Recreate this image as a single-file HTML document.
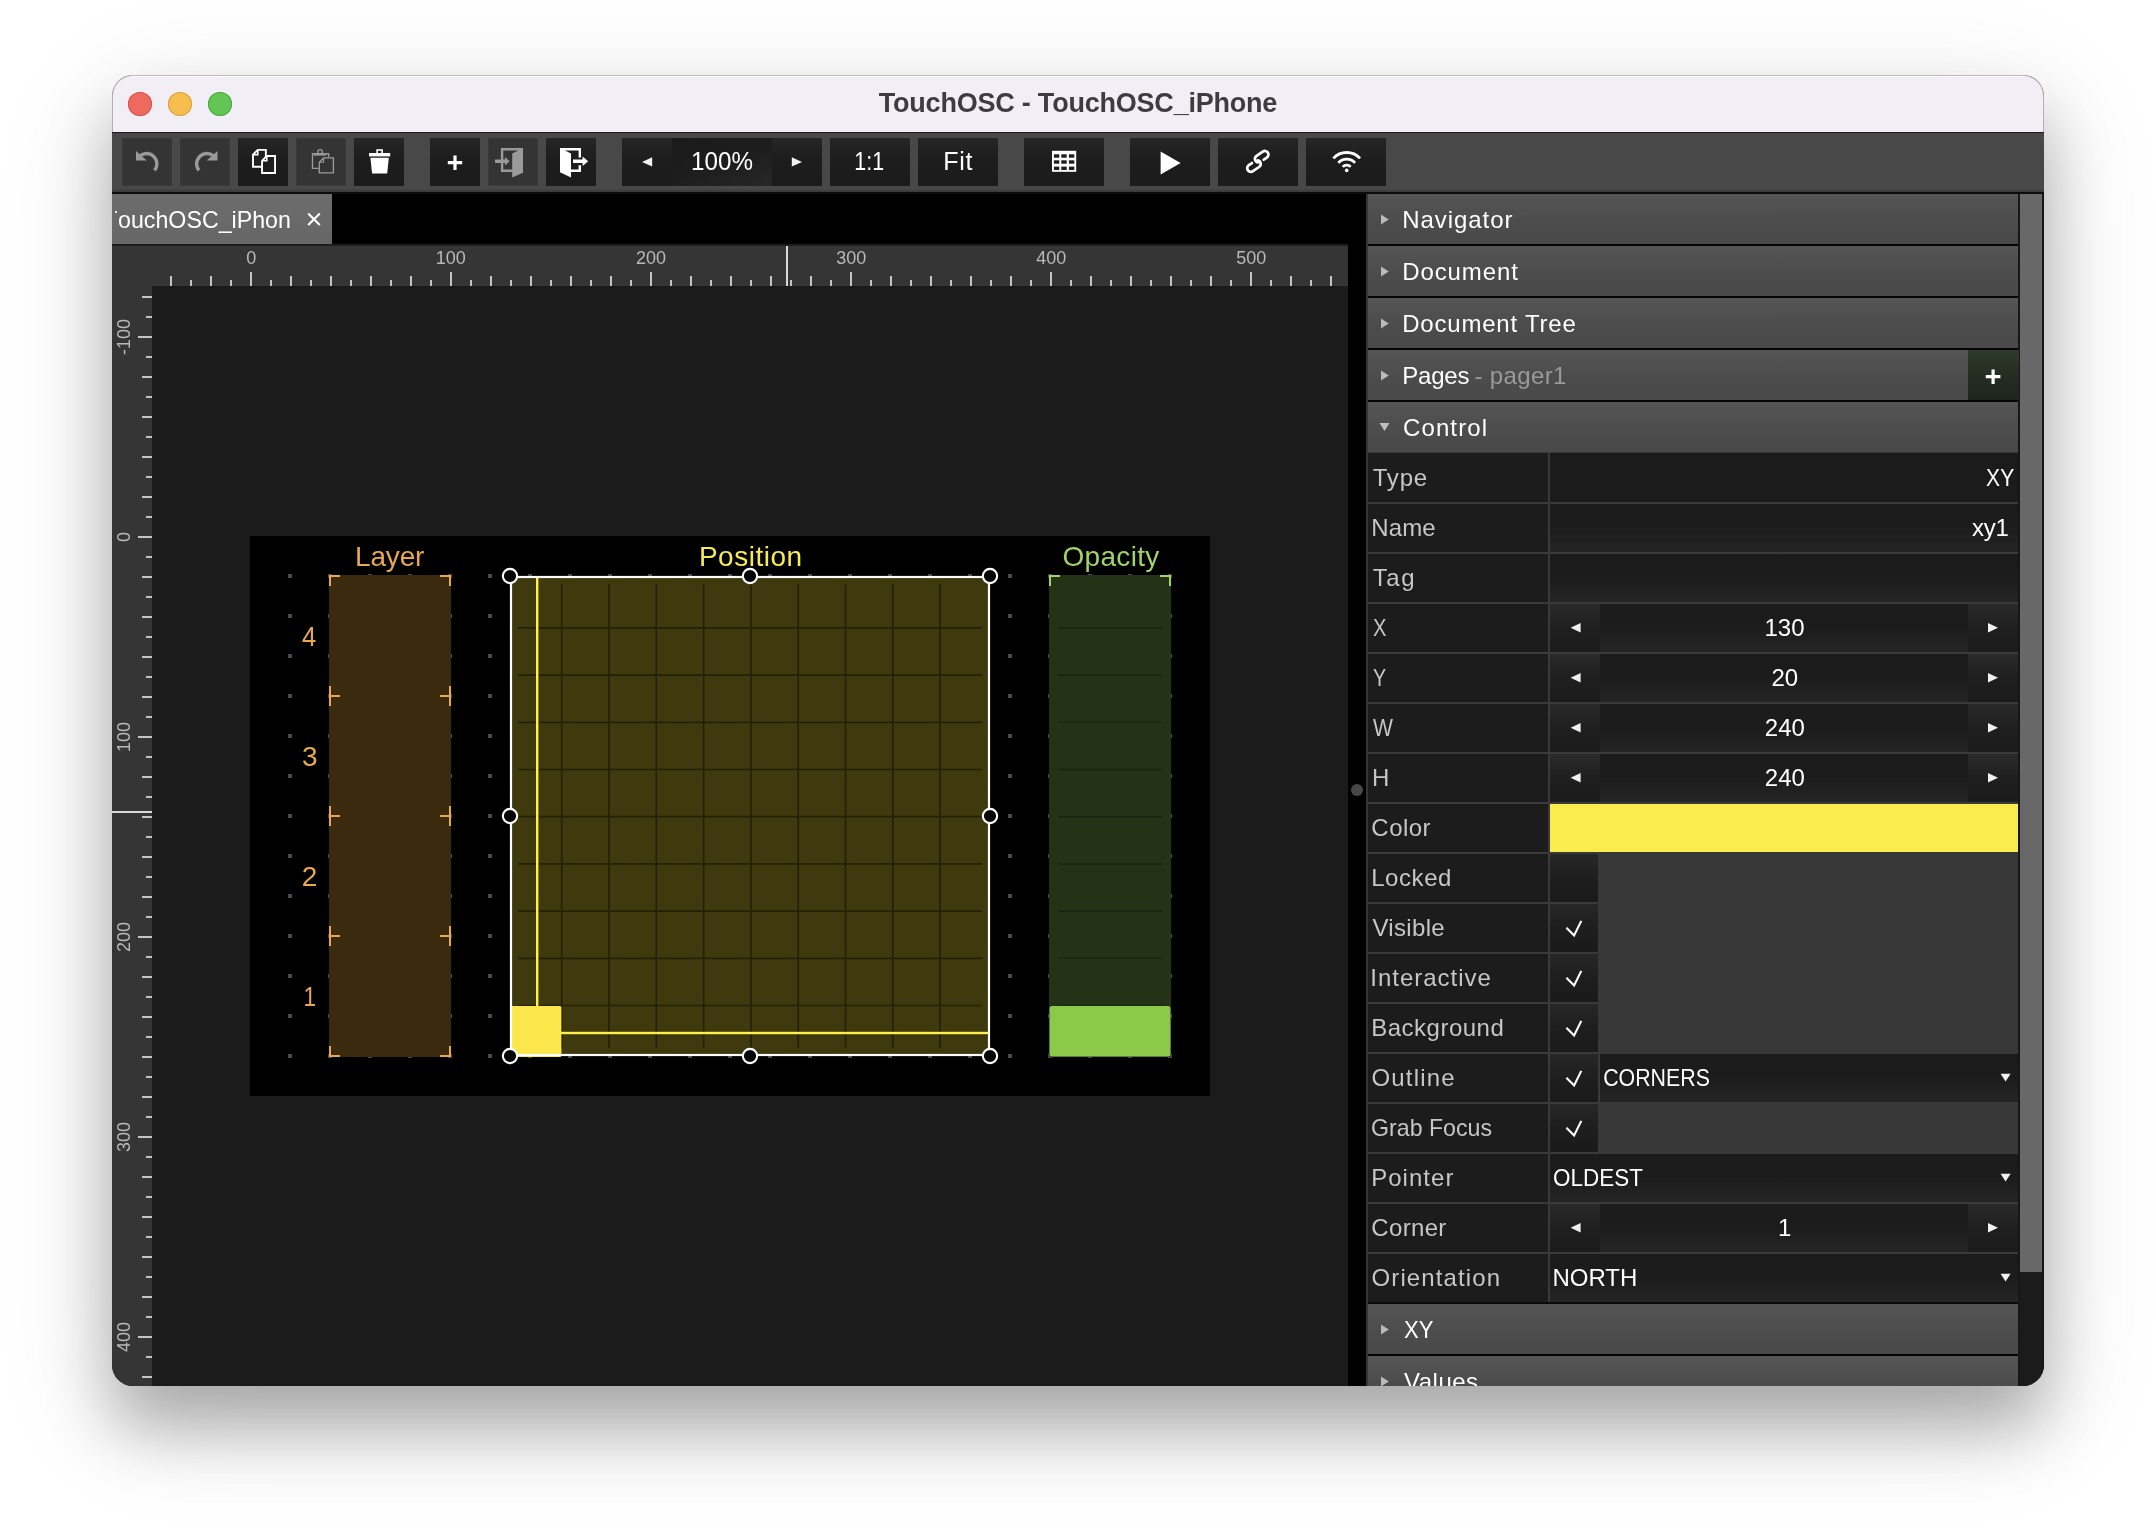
<!DOCTYPE html>
<html lang="en"><head><meta charset="utf-8"><title>TouchOSC - TouchOSC_iPhone</title>
<style>
html,body{margin:0;padding:0;}
body{width:2156px;height:1534px;background:#fff;overflow:hidden;position:relative;font-family:"Liberation Sans",sans-serif;}
.t{position:absolute;white-space:pre;font-family:"Liberation Sans",sans-serif;}
#win{position:absolute;left:112px;top:75px;width:1932px;height:1311px;border-radius:21px;overflow:hidden;background:#1b1b1b;}
#shadow{position:absolute;left:112px;top:75px;width:1932px;height:1311px;border-radius:21px;
 box-shadow:0 42px 66px rgba(0,0,0,0.28),0 30px 125px rgba(0,0,0,0.12);}
#abs{position:absolute;left:-112px;top:-75px;width:2156px;height:1534px;will-change:transform;}
.btn{position:absolute;top:138px;height:48px;background:linear-gradient(180deg,#262626 0%,#1d1d1d 45%,#1b1b1b 100%);}
.btn.dis{background:#343434;box-shadow:inset 0 0 0 1px #3a3a3a;}
.hdr{position:absolute;left:1368px;width:650px;height:50px;background:linear-gradient(180deg,#555 0%,#4c4c4c 55%,#494949 100%);}
.lab{position:absolute;left:1368px;width:180px;height:48px;background:#1c1c1c;}
.val{position:absolute;left:1550px;width:468px;height:48px;background:linear-gradient(180deg,#1b1b1b 0%,#1c1c1c 50%,#252525 100%);}
.sb{position:absolute;width:50px;height:48px;background:linear-gradient(180deg,#2a2a2a 0%,#1f1f1f 50%,#1b1b1b 100%);}
.chk{position:absolute;left:1550px;width:48px;height:48px;background:linear-gradient(180deg,#272727 0%,#1e1e1e 50%,#1a1a1a 100%);}
svg{position:absolute;overflow:visible;}
</style></head><body>
<div id="shadow"></div>
<div id="win"><div id="abs">

<div class="" style="position:absolute;left:112px;top:75px;width:1932px;height:57px;background:#f1eff5;box-shadow:inset 0 2px 0 rgba(255,255,255,0.85);"></div>
<div class="" style="position:absolute;left:112px;top:132px;width:1932px;height:1px;background:#26252a;"></div>
<div class="" style="position:absolute;left:128px;top:91.8px;width:24px;height:24px;border-radius:50%;background:#ee6a5f;box-shadow:inset 0 0 0 1px #d5544a;"></div>
<div class="" style="position:absolute;left:168px;top:91.8px;width:24px;height:24px;border-radius:50%;background:#f5be4f;box-shadow:inset 0 0 0 1px #d9a13c;"></div>
<div class="" style="position:absolute;left:208px;top:91.8px;width:24px;height:24px;border-radius:50%;background:#62c554;box-shadow:inset 0 0 0 1px #4ea73f;"></div>
<span class="t " style="left:878.75px;top:90.00px;font-size:27px;line-height:27px;font-weight:700;color:#3e3c41;letter-spacing:-0.215px;">TouchOSC - TouchOSC_iPhone</span>
<div class="" style="position:absolute;left:112px;top:133px;width:1932px;height:59px;background:#484848;"></div>
<div class="" style="position:absolute;left:112px;top:189px;width:1932px;height:3px;background:linear-gradient(180deg,#454545,#3a3a3a);"></div>
<div class="" style="position:absolute;left:112px;top:192px;width:1932px;height:2px;background:#0c0c0c;"></div>
<div class="btn dis" style="left:122px;width:50px;"></div>
<div class="btn dis" style="left:180px;width:50px;"></div>
<div class="btn" style="left:238px;width:50px;"></div>
<div class="btn dis" style="left:296px;width:50px;"></div>
<div class="btn" style="left:354px;width:50px;"></div>
<div class="btn" style="left:430px;width:50px;"></div>
<div class="btn dis" style="left:488px;width:50px;"></div>
<div class="btn" style="left:546px;width:50px;"></div>
<div class="btn" style="left:622px;width:50px;"></div>
<div class="btn" style="left:672px;width:100px;background:linear-gradient(160deg,#1b1b1b 0%,#1d1d1d 50%,#272727 100%);"></div>
<div class="btn" style="left:772px;width:50px;"></div>
<div class="btn" style="left:830px;width:80px;"></div>
<div class="btn" style="left:918px;width:80px;"></div>
<div class="btn" style="left:1024px;width:80px;"></div>
<div class="btn" style="left:1130px;width:80px;"></div>
<div class="btn" style="left:1218px;width:80px;"></div>
<div class="btn" style="left:1306px;width:80px;"></div>
<svg width="2156" height="1534" style="left:0;top:0" viewBox="0 0 2156 1534"><g transform="translate(147,0) scale(1,1)" fill="none" stroke="#9a9a9a" stroke-width="3.5"><path d="M-6.7,155.7 A10.3,10.3 0 0 1 7.55,170.4"/><path d="M-11,151 L-11,160.4 L-0.2,160.4 Z" fill="#9a9a9a" stroke="none"/></g><g transform="translate(206.5,0) scale(-1,1)" fill="none" stroke="#9a9a9a" stroke-width="3.5"><path d="M-6.7,155.7 A10.3,10.3 0 0 1 7.55,170.4"/><path d="M-11,151 L-11,160.4 L-0.2,160.4 Z" fill="#9a9a9a" stroke="none"/></g><path d="M257.8,149.85 L265.85,149.85 L265.85,166.75 L253.0,166.75 L253.0,154.65 Z" fill="#1e1e1e" stroke="#ffffff" stroke-width="1.9" stroke-linejoin="miter"/><path d="M253.0,154.65 L257.8,154.65 L257.8,149.85" fill="none" stroke="#ffffff" stroke-width="1.52"/><path d="M266.85,156.0 L275.05,156.0 L275.05,173.05 L262.05,173.05 L262.05,160.8 Z" fill="#1e1e1e" stroke="#ffffff" stroke-width="1.9" stroke-linejoin="miter"/><path d="M262.05,160.8 L266.85,160.8 L266.85,156.0" fill="none" stroke="#ffffff" stroke-width="1.52"/><path d="M328.6,156.9 V153.7 H312.5 V168.3 H318.8" fill="none" stroke="#9a9a9a" stroke-width="1.35"/><rect x="313.8" y="153.3" width="12.1" height="2.3" fill="#9a9a9a"/><path d="M317.9,153.4 V151.8 A2.15,2.15 0 0 1 322.2,151.8 V153.4" fill="none" stroke="#9a9a9a" stroke-width="1.4"/><path d="M323.6,157.9 L333.40000000000003,157.9 L333.40000000000003,172.9 L319.3,172.9 L319.3,162.20000000000002 Z" fill="#343434" stroke="#9a9a9a" stroke-width="1.35" stroke-linejoin="miter"/><path d="M319.3,162.20000000000002 L323.6,162.20000000000002 L323.6,157.9" fill="none" stroke="#9a9a9a" stroke-width="1.08"/><rect x="369" y="153" width="21.2" height="3.4" fill="#ffffff"/><rect x="377.1" y="150" width="5" height="4" fill="none" stroke="#ffffff" stroke-width="1.6"/><path d="M370.4,157.8 L388.8,157.8 L387.2,173.6 L372.1,173.6 Z" fill="#ffffff"/><path d="M447.8,162.7 H462.2 M455,155.4 V170" stroke="#ffffff" stroke-width="3.2"/><path d="M523,149.2 H502.1 V170.8 H513" fill="none" stroke="#9a9a9a" stroke-width="2.4"/><path d="M512.2,153.4 L523,148 L523,172.8 L512.2,177.6 Z" fill="#9a9a9a"/><path d="M495,159.6 H505 V157 L509.6,161.3 L505,165.6 V163 H495 Z" fill="#9a9a9a"/><path d="M560,148 L571,153.4 L571,177.6 L560,172.2 Z" fill="#ffffff"/><path d="M560,149.2 H579.8 V157.4 M579.8,165.2 V170.8 H571" fill="none" stroke="#ffffff" stroke-width="2.4"/><path d="M573,159.6 H582.6 V156.6 L588.2,161.3 L582.6,166 V163 H573 Z" fill="#ffffff"/><path d="M652.2,157.2 L652.2,166.6 L642,161.9 Z" fill="#f0f0f0"/><path d="M791.8,157.2 L791.8,166.6 L802,161.9 Z" fill="#f0f0f0"/><rect x="1052" y="150.8" width="24.2" height="21" fill="#ffffff"/><rect x="1053.9" y="154.3" width="5.4" height="3.4" fill="#1e1e1e"/><rect x="1053.9" y="160.3" width="5.4" height="3.4" fill="#1e1e1e"/><rect x="1053.9" y="166.6" width="5.4" height="3.4" fill="#1e1e1e"/><rect x="1061.3" y="154.3" width="5.4" height="3.4" fill="#1e1e1e"/><rect x="1061.3" y="160.3" width="5.4" height="3.4" fill="#1e1e1e"/><rect x="1061.3" y="166.6" width="5.4" height="3.4" fill="#1e1e1e"/><rect x="1068.9" y="154.3" width="5.4" height="3.4" fill="#1e1e1e"/><rect x="1068.9" y="160.3" width="5.4" height="3.4" fill="#1e1e1e"/><rect x="1068.9" y="166.6" width="5.4" height="3.4" fill="#1e1e1e"/><path d="M1160.6,151.6 L1180.6,163 L1160.6,174.4 Z" fill="#ffffff"/><g fill="none" stroke="#ffffff" stroke-width="2.7" stroke-linecap="round"><path transform="translate(1253.97,166.07) rotate(-34)" d="M0,-3.65 H-3.75 A3.65,3.65 0 0 0 -3.75,3.65 H3.75 A3.65,3.65 0 0 0 6.33,-2.58"/><path transform="translate(1261.7,156.7) rotate(146)" d="M0,-3.65 H-3.75 A3.65,3.65 0 0 0 -3.75,3.65 H3.75 A3.65,3.65 0 0 0 6.33,-2.58"/></g><g fill="none" stroke="#ffffff" stroke-width="2.8" stroke-linecap="butt"><path d="M1333.40,158.42 A17.9,17.9 0 0 1 1360.00,158.42"/><path d="M1338.38,162.91 A11.2,11.2 0 0 1 1355.02,162.91"/><path d="M1342.76,166.85 A5.3,5.3 0 0 1 1350.64,166.85"/></g><circle cx="1346.7" cy="170.4" r="1.8" fill="#ffffff"/></svg>
<span class="t " style="left:690.52px;top:149.00px;font-size:25px;line-height:25px;font-weight:400;color:#fff;letter-spacing:0.000px;transform:scaleX(0.9682);transform-origin:1.88px 50%;">100%</span>
<span class="t " style="left:854.12px;top:149.00px;font-size:25px;line-height:25px;font-weight:400;color:#fff;letter-spacing:0.000px;transform:scaleX(0.8567);transform-origin:1.88px 50%;">1:1</span>
<span class="t " style="left:943.30px;top:149.00px;font-size:25px;line-height:25px;font-weight:400;color:#fff;letter-spacing:0.738px;">Fit</span>
<div class="" style="position:absolute;left:112px;top:194px;width:1254px;height:52px;background:#000;"></div>
<div class="" style="position:absolute;left:112px;top:194px;width:220px;height:50px;background:linear-gradient(180deg,#6d6d6d,#666);overflow:hidden;"></div>
<div class="" style="position:absolute;left:112px;top:194px;width:220px;height:50px;overflow:hidden;"><span class="t " style="left:6.40px;top:13.60px;font-size:24px;line-height:24px;font-weight:400;color:#fff;letter-spacing:0.000px;transform:scaleX(0.9669);transform-origin:1.00px 50%;">ouchOSC_iPhon</span><div class="" style="position:absolute;left:3.4px;top:16.6px;width:1.8px;height:2.2px;background:#e8e8e8;"></div></div>
<svg width="14" height="14" style="left:307px;top:212px" viewBox="0 0 14 14"><path d="M1.2,1.4 L12.8,13 M12.8,1.4 L1.2,13" stroke="#fff" stroke-width="2.1" fill="none"/></svg>
<div class="" style="position:absolute;left:112px;top:244px;width:1236px;height:2px;background:#1d1d1d;"></div>
<div class="" style="position:absolute;left:112px;top:246px;width:1236px;height:40px;background:#353535;"></div>
<div class="" style="position:absolute;left:112px;top:246px;width:40px;height:1140px;background:#353535;"></div>
<div class="" style="position:absolute;left:152px;top:286px;width:1196px;height:1100px;background:#1b1b1b;"></div>
<svg width="2156" height="1534" style="left:0;top:0" viewBox="0 0 2156 1534" fill="#c4c4c4"><rect x="170" y="276" width="2" height="10"/><rect x="190" y="280" width="2" height="6"/><rect x="210" y="276" width="2" height="10"/><rect x="230" y="280" width="2" height="6"/><rect x="250" y="272" width="2" height="14"/><rect x="270" y="280" width="2" height="6"/><rect x="290" y="276" width="2" height="10"/><rect x="310" y="280" width="2" height="6"/><rect x="330" y="276" width="2" height="10"/><rect x="350" y="280" width="2" height="6"/><rect x="370" y="276" width="2" height="10"/><rect x="390" y="280" width="2" height="6"/><rect x="410" y="276" width="2" height="10"/><rect x="430" y="280" width="2" height="6"/><rect x="450" y="272" width="2" height="14"/><rect x="470" y="280" width="2" height="6"/><rect x="490" y="276" width="2" height="10"/><rect x="510" y="280" width="2" height="6"/><rect x="530" y="276" width="2" height="10"/><rect x="550" y="280" width="2" height="6"/><rect x="570" y="276" width="2" height="10"/><rect x="590" y="280" width="2" height="6"/><rect x="610" y="276" width="2" height="10"/><rect x="630" y="280" width="2" height="6"/><rect x="650" y="272" width="2" height="14"/><rect x="670" y="280" width="2" height="6"/><rect x="690" y="276" width="2" height="10"/><rect x="710" y="280" width="2" height="6"/><rect x="730" y="276" width="2" height="10"/><rect x="750" y="280" width="2" height="6"/><rect x="770" y="276" width="2" height="10"/><rect x="790" y="280" width="2" height="6"/><rect x="810" y="276" width="2" height="10"/><rect x="830" y="280" width="2" height="6"/><rect x="850" y="272" width="2" height="14"/><rect x="870" y="280" width="2" height="6"/><rect x="890" y="276" width="2" height="10"/><rect x="910" y="280" width="2" height="6"/><rect x="930" y="276" width="2" height="10"/><rect x="950" y="280" width="2" height="6"/><rect x="970" y="276" width="2" height="10"/><rect x="990" y="280" width="2" height="6"/><rect x="1010" y="276" width="2" height="10"/><rect x="1030" y="280" width="2" height="6"/><rect x="1050" y="272" width="2" height="14"/><rect x="1070" y="280" width="2" height="6"/><rect x="1090" y="276" width="2" height="10"/><rect x="1110" y="280" width="2" height="6"/><rect x="1130" y="276" width="2" height="10"/><rect x="1150" y="280" width="2" height="6"/><rect x="1170" y="276" width="2" height="10"/><rect x="1190" y="280" width="2" height="6"/><rect x="1210" y="276" width="2" height="10"/><rect x="1230" y="280" width="2" height="6"/><rect x="1250" y="272" width="2" height="14"/><rect x="1270" y="280" width="2" height="6"/><rect x="1290" y="276" width="2" height="10"/><rect x="1310" y="280" width="2" height="6"/><rect x="1330" y="276" width="2" height="10"/><rect x="142" y="296" width="10" height="2"/><rect x="146" y="316" width="6" height="2"/><rect x="138" y="336" width="14" height="2"/><rect x="146" y="356" width="6" height="2"/><rect x="142" y="376" width="10" height="2"/><rect x="146" y="396" width="6" height="2"/><rect x="142" y="416" width="10" height="2"/><rect x="146" y="436" width="6" height="2"/><rect x="142" y="456" width="10" height="2"/><rect x="146" y="476" width="6" height="2"/><rect x="142" y="496" width="10" height="2"/><rect x="146" y="516" width="6" height="2"/><rect x="138" y="536" width="14" height="2"/><rect x="146" y="556" width="6" height="2"/><rect x="142" y="576" width="10" height="2"/><rect x="146" y="596" width="6" height="2"/><rect x="142" y="616" width="10" height="2"/><rect x="146" y="636" width="6" height="2"/><rect x="142" y="656" width="10" height="2"/><rect x="146" y="676" width="6" height="2"/><rect x="142" y="696" width="10" height="2"/><rect x="146" y="716" width="6" height="2"/><rect x="138" y="736" width="14" height="2"/><rect x="146" y="756" width="6" height="2"/><rect x="142" y="776" width="10" height="2"/><rect x="146" y="796" width="6" height="2"/><rect x="142" y="816" width="10" height="2"/><rect x="146" y="836" width="6" height="2"/><rect x="142" y="856" width="10" height="2"/><rect x="146" y="876" width="6" height="2"/><rect x="142" y="896" width="10" height="2"/><rect x="146" y="916" width="6" height="2"/><rect x="138" y="936" width="14" height="2"/><rect x="146" y="956" width="6" height="2"/><rect x="142" y="976" width="10" height="2"/><rect x="146" y="996" width="6" height="2"/><rect x="142" y="1016" width="10" height="2"/><rect x="146" y="1036" width="6" height="2"/><rect x="142" y="1056" width="10" height="2"/><rect x="146" y="1076" width="6" height="2"/><rect x="142" y="1096" width="10" height="2"/><rect x="146" y="1116" width="6" height="2"/><rect x="138" y="1136" width="14" height="2"/><rect x="146" y="1156" width="6" height="2"/><rect x="142" y="1176" width="10" height="2"/><rect x="146" y="1196" width="6" height="2"/><rect x="142" y="1216" width="10" height="2"/><rect x="146" y="1236" width="6" height="2"/><rect x="142" y="1256" width="10" height="2"/><rect x="146" y="1276" width="6" height="2"/><rect x="142" y="1296" width="10" height="2"/><rect x="146" y="1316" width="6" height="2"/><rect x="138" y="1336" width="14" height="2"/><rect x="146" y="1356" width="6" height="2"/><rect x="142" y="1376" width="10" height="2"/></svg>
<span class="t " style="left:246.14px;top:249.00px;font-size:18px;line-height:18px;font-weight:400;color:#b9b9b9;letter-spacing:0.000px;">0</span>
<span class="t " style="left:435.82px;top:249.00px;font-size:18px;line-height:18px;font-weight:400;color:#b9b9b9;letter-spacing:0.000px;">100</span>
<span class="t " style="left:636.08px;top:249.00px;font-size:18px;line-height:18px;font-weight:400;color:#b9b9b9;letter-spacing:0.000px;">200</span>
<span class="t " style="left:836.20px;top:249.00px;font-size:18px;line-height:18px;font-weight:400;color:#b9b9b9;letter-spacing:0.000px;">300</span>
<span class="t " style="left:1036.33px;top:249.00px;font-size:18px;line-height:18px;font-weight:400;color:#b9b9b9;letter-spacing:0.000px;">400</span>
<span class="t " style="left:1236.14px;top:249.00px;font-size:18px;line-height:18px;font-weight:400;color:#b9b9b9;letter-spacing:0.000px;">500</span>
<div style="position:absolute;left:74.4px;top:327px;width:100px;height:20px;transform:rotate(-90deg);text-align:center;font:400 18px/20px 'Liberation Sans',sans-serif;color:#b9b9b9;">-100</div>
<div style="position:absolute;left:74.4px;top:527px;width:100px;height:20px;transform:rotate(-90deg);text-align:center;font:400 18px/20px 'Liberation Sans',sans-serif;color:#b9b9b9;">0</div>
<div style="position:absolute;left:74.4px;top:727px;width:100px;height:20px;transform:rotate(-90deg);text-align:center;font:400 18px/20px 'Liberation Sans',sans-serif;color:#b9b9b9;">100</div>
<div style="position:absolute;left:74.4px;top:927px;width:100px;height:20px;transform:rotate(-90deg);text-align:center;font:400 18px/20px 'Liberation Sans',sans-serif;color:#b9b9b9;">200</div>
<div style="position:absolute;left:74.4px;top:1127px;width:100px;height:20px;transform:rotate(-90deg);text-align:center;font:400 18px/20px 'Liberation Sans',sans-serif;color:#b9b9b9;">300</div>
<div style="position:absolute;left:74.4px;top:1327px;width:100px;height:20px;transform:rotate(-90deg);text-align:center;font:400 18px/20px 'Liberation Sans',sans-serif;color:#b9b9b9;">400</div>
<div class="" style="position:absolute;left:786px;top:246px;width:2px;height:40px;background:#d8d8d8;"></div>
<div class="" style="position:absolute;left:112px;top:811px;width:40px;height:2px;background:#d8d8d8;"></div>
<div class="" style="position:absolute;left:1348px;top:194px;width:18px;height:1192px;background:#000;"></div>
<div class="" style="position:absolute;left:1351.1px;top:784.2px;width:11.8px;height:11.8px;border-radius:50%;background:#474747;"></div>
<div class="" style="position:absolute;left:250px;top:536px;width:960px;height:560px;background:#000;"></div>
<svg width="2156" height="1534" style="left:0;top:0" viewBox="0 0 2156 1534"><path d="M288,574h4v4h-4zM288,614h4v4h-4zM288,654h4v4h-4zM288,694h4v4h-4zM288,734h4v4h-4zM288,774h4v4h-4zM288,814h4v4h-4zM288,854h4v4h-4zM288,894h4v4h-4zM288,934h4v4h-4zM288,974h4v4h-4zM288,1014h4v4h-4zM288,1054h4v4h-4zM328,574h4v4h-4zM328,614h4v4h-4zM328,654h4v4h-4zM328,694h4v4h-4zM328,734h4v4h-4zM328,774h4v4h-4zM328,814h4v4h-4zM328,854h4v4h-4zM328,894h4v4h-4zM328,934h4v4h-4zM328,974h4v4h-4zM328,1014h4v4h-4zM328,1054h4v4h-4zM368,574h4v4h-4zM368,614h4v4h-4zM368,654h4v4h-4zM368,694h4v4h-4zM368,734h4v4h-4zM368,774h4v4h-4zM368,814h4v4h-4zM368,854h4v4h-4zM368,894h4v4h-4zM368,934h4v4h-4zM368,974h4v4h-4zM368,1014h4v4h-4zM368,1054h4v4h-4zM408,574h4v4h-4zM408,614h4v4h-4zM408,654h4v4h-4zM408,694h4v4h-4zM408,734h4v4h-4zM408,774h4v4h-4zM408,814h4v4h-4zM408,854h4v4h-4zM408,894h4v4h-4zM408,934h4v4h-4zM408,974h4v4h-4zM408,1014h4v4h-4zM408,1054h4v4h-4zM448,574h4v4h-4zM448,614h4v4h-4zM448,654h4v4h-4zM448,694h4v4h-4zM448,734h4v4h-4zM448,774h4v4h-4zM448,814h4v4h-4zM448,854h4v4h-4zM448,894h4v4h-4zM448,934h4v4h-4zM448,974h4v4h-4zM448,1014h4v4h-4zM448,1054h4v4h-4zM488,574h4v4h-4zM488,614h4v4h-4zM488,654h4v4h-4zM488,694h4v4h-4zM488,734h4v4h-4zM488,774h4v4h-4zM488,814h4v4h-4zM488,854h4v4h-4zM488,894h4v4h-4zM488,934h4v4h-4zM488,974h4v4h-4zM488,1014h4v4h-4zM488,1054h4v4h-4zM528,574h4v4h-4zM528,614h4v4h-4zM528,654h4v4h-4zM528,694h4v4h-4zM528,734h4v4h-4zM528,774h4v4h-4zM528,814h4v4h-4zM528,854h4v4h-4zM528,894h4v4h-4zM528,934h4v4h-4zM528,974h4v4h-4zM528,1014h4v4h-4zM528,1054h4v4h-4zM568,574h4v4h-4zM568,614h4v4h-4zM568,654h4v4h-4zM568,694h4v4h-4zM568,734h4v4h-4zM568,774h4v4h-4zM568,814h4v4h-4zM568,854h4v4h-4zM568,894h4v4h-4zM568,934h4v4h-4zM568,974h4v4h-4zM568,1014h4v4h-4zM568,1054h4v4h-4zM608,574h4v4h-4zM608,614h4v4h-4zM608,654h4v4h-4zM608,694h4v4h-4zM608,734h4v4h-4zM608,774h4v4h-4zM608,814h4v4h-4zM608,854h4v4h-4zM608,894h4v4h-4zM608,934h4v4h-4zM608,974h4v4h-4zM608,1014h4v4h-4zM608,1054h4v4h-4zM648,574h4v4h-4zM648,614h4v4h-4zM648,654h4v4h-4zM648,694h4v4h-4zM648,734h4v4h-4zM648,774h4v4h-4zM648,814h4v4h-4zM648,854h4v4h-4zM648,894h4v4h-4zM648,934h4v4h-4zM648,974h4v4h-4zM648,1014h4v4h-4zM648,1054h4v4h-4zM688,574h4v4h-4zM688,614h4v4h-4zM688,654h4v4h-4zM688,694h4v4h-4zM688,734h4v4h-4zM688,774h4v4h-4zM688,814h4v4h-4zM688,854h4v4h-4zM688,894h4v4h-4zM688,934h4v4h-4zM688,974h4v4h-4zM688,1014h4v4h-4zM688,1054h4v4h-4zM728,574h4v4h-4zM728,614h4v4h-4zM728,654h4v4h-4zM728,694h4v4h-4zM728,734h4v4h-4zM728,774h4v4h-4zM728,814h4v4h-4zM728,854h4v4h-4zM728,894h4v4h-4zM728,934h4v4h-4zM728,974h4v4h-4zM728,1014h4v4h-4zM728,1054h4v4h-4zM768,574h4v4h-4zM768,614h4v4h-4zM768,654h4v4h-4zM768,694h4v4h-4zM768,734h4v4h-4zM768,774h4v4h-4zM768,814h4v4h-4zM768,854h4v4h-4zM768,894h4v4h-4zM768,934h4v4h-4zM768,974h4v4h-4zM768,1014h4v4h-4zM768,1054h4v4h-4zM808,574h4v4h-4zM808,614h4v4h-4zM808,654h4v4h-4zM808,694h4v4h-4zM808,734h4v4h-4zM808,774h4v4h-4zM808,814h4v4h-4zM808,854h4v4h-4zM808,894h4v4h-4zM808,934h4v4h-4zM808,974h4v4h-4zM808,1014h4v4h-4zM808,1054h4v4h-4zM848,574h4v4h-4zM848,614h4v4h-4zM848,654h4v4h-4zM848,694h4v4h-4zM848,734h4v4h-4zM848,774h4v4h-4zM848,814h4v4h-4zM848,854h4v4h-4zM848,894h4v4h-4zM848,934h4v4h-4zM848,974h4v4h-4zM848,1014h4v4h-4zM848,1054h4v4h-4zM888,574h4v4h-4zM888,614h4v4h-4zM888,654h4v4h-4zM888,694h4v4h-4zM888,734h4v4h-4zM888,774h4v4h-4zM888,814h4v4h-4zM888,854h4v4h-4zM888,894h4v4h-4zM888,934h4v4h-4zM888,974h4v4h-4zM888,1014h4v4h-4zM888,1054h4v4h-4zM928,574h4v4h-4zM928,614h4v4h-4zM928,654h4v4h-4zM928,694h4v4h-4zM928,734h4v4h-4zM928,774h4v4h-4zM928,814h4v4h-4zM928,854h4v4h-4zM928,894h4v4h-4zM928,934h4v4h-4zM928,974h4v4h-4zM928,1014h4v4h-4zM928,1054h4v4h-4zM968,574h4v4h-4zM968,614h4v4h-4zM968,654h4v4h-4zM968,694h4v4h-4zM968,734h4v4h-4zM968,774h4v4h-4zM968,814h4v4h-4zM968,854h4v4h-4zM968,894h4v4h-4zM968,934h4v4h-4zM968,974h4v4h-4zM968,1014h4v4h-4zM968,1054h4v4h-4zM1008,574h4v4h-4zM1008,614h4v4h-4zM1008,654h4v4h-4zM1008,694h4v4h-4zM1008,734h4v4h-4zM1008,774h4v4h-4zM1008,814h4v4h-4zM1008,854h4v4h-4zM1008,894h4v4h-4zM1008,934h4v4h-4zM1008,974h4v4h-4zM1008,1014h4v4h-4zM1008,1054h4v4h-4zM1048,574h4v4h-4zM1048,614h4v4h-4zM1048,654h4v4h-4zM1048,694h4v4h-4zM1048,734h4v4h-4zM1048,774h4v4h-4zM1048,814h4v4h-4zM1048,854h4v4h-4zM1048,894h4v4h-4zM1048,934h4v4h-4zM1048,974h4v4h-4zM1048,1014h4v4h-4zM1048,1054h4v4h-4zM1088,574h4v4h-4zM1088,614h4v4h-4zM1088,654h4v4h-4zM1088,694h4v4h-4zM1088,734h4v4h-4zM1088,774h4v4h-4zM1088,814h4v4h-4zM1088,854h4v4h-4zM1088,894h4v4h-4zM1088,934h4v4h-4zM1088,974h4v4h-4zM1088,1014h4v4h-4zM1088,1054h4v4h-4zM1128,574h4v4h-4zM1128,614h4v4h-4zM1128,654h4v4h-4zM1128,694h4v4h-4zM1128,734h4v4h-4zM1128,774h4v4h-4zM1128,814h4v4h-4zM1128,854h4v4h-4zM1128,894h4v4h-4zM1128,934h4v4h-4zM1128,974h4v4h-4zM1128,1014h4v4h-4zM1128,1054h4v4h-4zM1168,574h4v4h-4zM1168,614h4v4h-4zM1168,654h4v4h-4zM1168,694h4v4h-4zM1168,734h4v4h-4zM1168,774h4v4h-4zM1168,814h4v4h-4zM1168,854h4v4h-4zM1168,894h4v4h-4zM1168,934h4v4h-4zM1168,974h4v4h-4zM1168,1014h4v4h-4zM1168,1054h4v4h-4z" fill="#494949"/><rect x="329" y="575" width="122" height="482" fill="#3c2a0f"/><path d="M330,586V576H340 M440,576H450V586 M330,1046V1056H340 M440,1056H450V1046 M330,686V706 M330,696H340 M450,686V706 M450,696H440 M330,806V826 M330,816H340 M450,806V826 M450,816H440 M330,926V946 M330,936H340 M450,926V946 M450,936H440 " fill="none" stroke="#e9a84e" stroke-width="2"/><rect x="510" y="576" width="480" height="480" fill="#3e3a0e"/><path d="M561.7,584V1048 M518,627.9H982 M609.0,584V1048 M518,675.1H982 M656.3,584V1048 M518,722.3H982 M703.6,584V1048 M518,769.5H982 M750.9,584V1048 M518,816.7H982 M798.2,584V1048 M518,863.9H982 M845.5,584V1048 M518,911.1H982 M892.8,584V1048 M518,958.3H982 M940.1,584V1048 M518,1005.5H982 " fill="none" stroke="#252107" stroke-width="1.7"/><rect x="536" y="578" width="2.4" height="428" fill="#fff04a"/><rect x="561" y="1031.8" width="427" height="2.4" fill="#fff04a"/><rect x="511" y="1006" width="50.4" height="51" rx="1.5" fill="#fbe74b"/><rect x="511" y="577" width="478" height="478" fill="none" stroke="#fff" stroke-width="2.2"/><circle cx="510" cy="576" r="7.15" fill="#060606" stroke="#fff" stroke-width="2.1"/><circle cx="510" cy="816" r="7.15" fill="#060606" stroke="#fff" stroke-width="2.1"/><circle cx="510" cy="1056" r="7.15" fill="#060606" stroke="#fff" stroke-width="2.1"/><circle cx="750" cy="576" r="7.15" fill="#060606" stroke="#fff" stroke-width="2.1"/><circle cx="750" cy="1056" r="7.15" fill="#060606" stroke="#fff" stroke-width="2.1"/><circle cx="990" cy="576" r="7.15" fill="#060606" stroke="#fff" stroke-width="2.1"/><circle cx="990" cy="816" r="7.15" fill="#060606" stroke="#fff" stroke-width="2.1"/><circle cx="990" cy="1056" r="7.15" fill="#060606" stroke="#fff" stroke-width="2.1"/><rect x="1049" y="575" width="122" height="482" fill="#243216"/><path d="M1058,627.9H1162 M1058,675.1H1162 M1058,722.3H1162 M1058,769.5H1162 M1058,816.7H1162 M1058,863.9H1162 M1058,911.1H1162 M1058,958.3H1162 M1058,1005.5H1162 " fill="none" stroke="#1a2610" stroke-width="1.6"/><path d="M1050,586V576H1060 M1160,576H1170V586 " fill="none" stroke="#a0d465" stroke-width="2"/><rect x="1049.5" y="1006" width="121" height="50.6" rx="2.5" fill="#8bc94a"/></svg>
<span class="t " style="left:355.05px;top:543.00px;font-size:28px;line-height:28px;font-weight:400;color:#e9a84e;letter-spacing:-0.169px;">Layer</span>
<span class="t " style="left:698.95px;top:542.70px;font-size:28px;line-height:28px;font-weight:400;color:#f6ea55;letter-spacing:0.500px;">Position</span>
<span class="t " style="left:1062.42px;top:542.70px;font-size:28px;line-height:28px;font-weight:400;color:#a0d465;letter-spacing:0.338px;">Opacity</span>
<span class="t " style="left:302.18px;top:623.00px;font-size:28px;line-height:28px;font-weight:400;color:#e9a84e;letter-spacing:0.000px;transform:scaleX(0.9133);transform-origin:0.62px 50%;">4</span>
<span class="t " style="left:302.07px;top:743.00px;font-size:28px;line-height:28px;font-weight:400;color:#e9a84e;letter-spacing:0.000px;">3</span>
<span class="t " style="left:301.82px;top:863.00px;font-size:28px;line-height:28px;font-weight:400;color:#e9a84e;letter-spacing:0.000px;">2</span>
<span class="t " style="left:302.57px;top:983.00px;font-size:28px;line-height:28px;font-weight:400;color:#e9a84e;letter-spacing:0.000px;transform:scaleX(0.8082);transform-origin:2.12px 50%;">1</span>
<div class="" style="position:absolute;left:1366px;top:194px;width:678px;height:1192px;background:#1b1b1b;"></div>
<div class="" style="position:absolute;left:2018px;top:194px;width:2px;height:1192px;background:#171717;"></div>
<div class="" style="position:absolute;left:1366px;top:194px;width:2px;height:1192px;background:#353535;"></div>
<div class="hdr" style="top:194px;height:50px"></div>
<div class="" style="position:absolute;left:1368px;top:244px;width:650px;height:2px;background:#050505;"></div>
<svg width="10" height="12" style="left:1380px;top:213.6px" viewBox="0 0 10 12"><path d="M1,0.6 L8.8,5.5 L1,10.4 Z" fill="#bababa"/></svg>
<span class="t " style="left:1402.20px;top:207.80px;font-size:24px;line-height:24px;font-weight:400;color:#fff;letter-spacing:0.953px;">Navigator</span>
<div class="hdr" style="top:246px;height:50px"></div>
<div class="" style="position:absolute;left:1368px;top:296px;width:650px;height:2px;background:#050505;"></div>
<svg width="10" height="12" style="left:1380px;top:265.6px" viewBox="0 0 10 12"><path d="M1,0.6 L8.8,5.5 L1,10.4 Z" fill="#bababa"/></svg>
<span class="t " style="left:1402.20px;top:259.80px;font-size:24px;line-height:24px;font-weight:400;color:#fff;letter-spacing:0.907px;">Document</span>
<div class="hdr" style="top:298px;height:50px"></div>
<div class="" style="position:absolute;left:1368px;top:348px;width:650px;height:2px;background:#050505;"></div>
<svg width="10" height="12" style="left:1380px;top:317.6px" viewBox="0 0 10 12"><path d="M1,0.6 L8.8,5.5 L1,10.4 Z" fill="#bababa"/></svg>
<span class="t " style="left:1402.20px;top:311.80px;font-size:24px;line-height:24px;font-weight:400;color:#fff;letter-spacing:0.800px;">Document Tree</span>
<div class="hdr" style="top:350px;height:50px"></div>
<div class="" style="position:absolute;left:1368px;top:400px;width:650px;height:2px;background:#050505;"></div>
<svg width="10" height="12" style="left:1380px;top:369.6px" viewBox="0 0 10 12"><path d="M1,0.6 L8.8,5.5 L1,10.4 Z" fill="#bababa"/></svg>
<span class="t " style="left:1402.20px;top:363.80px;font-size:24px;line-height:24px;font-weight:400;color:#fff;letter-spacing:-0.206px;">Pages</span>
<span class="t " style="left:1474.50px;top:363.80px;font-size:24px;line-height:24px;font-weight:400;color:#9a9a9a;letter-spacing:0.350px;">- pager1</span>
<div class="" style="position:absolute;left:1968px;top:350px;width:51px;height:50px;background:linear-gradient(180deg,#2e3a2c 0%,#232d21 50%,#1e261c 100%);"></div>
<svg width="16" height="16" style="left:1985px;top:369px" viewBox="0 0 16 16"><path d="M0.8,7.7 H15.4 M8.1,0.4 V15" stroke="#fff" stroke-width="3.2" fill="none"/></svg>
<div class="hdr" style="top:402px;height:50px"></div>
<div class="" style="position:absolute;left:1368px;top:452px;width:650px;height:2px;background:#050505;"></div>
<svg width="12" height="10" style="left:1379px;top:422px" viewBox="0 0 12 10"><path d="M0.5,1 L10.5,1 L5.5,9 Z" fill="#bdbdbd"/></svg>
<span class="t " style="left:1402.95px;top:415.80px;font-size:24px;line-height:24px;font-weight:400;color:#fff;letter-spacing:1.133px;">Control</span>
<div class="" style="position:absolute;left:1368px;top:452px;width:650px;height:852px;background:#3a3a3a;"></div>
<div class="lab" style="top:453px;height:49px"></div>
<span class="t " style="left:1372.70px;top:466.00px;font-size:24px;line-height:24px;font-weight:400;color:#c6c6c6;letter-spacing:0.808px;">Type</span>
<div class="val" style="top:453px;height:49px;background:#1b1b1b"></div>
<span class="t " style="left:1985.78px;top:466.00px;font-size:24px;line-height:24px;font-weight:400;color:#fff;letter-spacing:0.000px;transform:scaleX(0.8777);transform-origin:0.62px 50%;">XY</span>
<div class="lab" style="top:504px;height:48px"></div>
<span class="t " style="left:1371.20px;top:516.00px;font-size:24px;line-height:24px;font-weight:400;color:#c6c6c6;letter-spacing:0.142px;">Name</span>
<div class="val" style="top:504px"></div>
<span class="t " style="left:1971.95px;top:515.70px;font-size:24px;line-height:24px;font-weight:400;color:#fff;letter-spacing:-0.250px;">xy1</span>
<div class="lab" style="top:554px;height:48px"></div>
<span class="t " style="left:1372.70px;top:566.00px;font-size:24px;line-height:24px;font-weight:400;color:#c6c6c6;letter-spacing:1.587px;">Tag</span>
<div class="val" style="top:554px"></div>
<div class="lab" style="top:604px;height:48px"></div>
<span class="t " style="left:1373.38px;top:616.00px;font-size:24px;line-height:24px;font-weight:400;color:#c6c6c6;letter-spacing:0.000px;transform:scaleX(0.8403);transform-origin:0.62px 50%;">X</span>
<div class="sb" style="left:1550px;top:604px"></div>
<div class="val" style="left:1600px;width:368px;top:604px"></div>
<div class="sb" style="left:1968px;width:50px;top:604px"></div>
<svg width="12" height="12" style="left:1570px;top:622px" viewBox="0 0 12 12"><path d="M10.6,1 L10.6,10.6 L0.6,5.8 Z" fill="#f0f0f0"/></svg>
<svg width="12" height="12" style="left:1987px;top:622px" viewBox="0 0 12 12"><path d="M1,1 L1,10.6 L11,5.8 Z" fill="#f0f0f0"/></svg>
<span class="t " style="left:1764.50px;top:615.50px;font-size:24px;line-height:24px;font-weight:400;color:#fff;letter-spacing:0.000px;">130</span>
<div class="lab" style="top:654px;height:48px"></div>
<span class="t " style="left:1372.70px;top:666.00px;font-size:24px;line-height:24px;font-weight:400;color:#c6c6c6;letter-spacing:0.000px;transform:scaleX(0.8200);transform-origin:0.50px 50%;">Y</span>
<div class="sb" style="left:1550px;top:654px"></div>
<div class="val" style="left:1600px;width:368px;top:654px"></div>
<div class="sb" style="left:1968px;width:50px;top:654px"></div>
<svg width="12" height="12" style="left:1570px;top:672px" viewBox="0 0 12 12"><path d="M10.6,1 L10.6,10.6 L0.6,5.8 Z" fill="#f0f0f0"/></svg>
<svg width="12" height="12" style="left:1987px;top:672px" viewBox="0 0 12 12"><path d="M1,1 L1,10.6 L11,5.8 Z" fill="#f0f0f0"/></svg>
<span class="t " style="left:1771.50px;top:665.50px;font-size:24px;line-height:24px;font-weight:400;color:#fff;letter-spacing:0.000px;">20</span>
<div class="lab" style="top:704px;height:48px"></div>
<span class="t " style="left:1373.08px;top:716.00px;font-size:24px;line-height:24px;font-weight:400;color:#c6c6c6;letter-spacing:0.000px;transform:scaleX(0.8800);transform-origin:0.12px 50%;">W</span>
<div class="sb" style="left:1550px;top:704px"></div>
<div class="val" style="left:1600px;width:368px;top:704px"></div>
<div class="sb" style="left:1968px;width:50px;top:704px"></div>
<svg width="12" height="12" style="left:1570px;top:722px" viewBox="0 0 12 12"><path d="M10.6,1 L10.6,10.6 L0.6,5.8 Z" fill="#f0f0f0"/></svg>
<svg width="12" height="12" style="left:1987px;top:722px" viewBox="0 0 12 12"><path d="M1,1 L1,10.6 L11,5.8 Z" fill="#f0f0f0"/></svg>
<span class="t " style="left:1764.81px;top:715.50px;font-size:24px;line-height:24px;font-weight:400;color:#fff;letter-spacing:0.000px;">240</span>
<div class="lab" style="top:754px;height:48px"></div>
<span class="t " style="left:1372.00px;top:766.00px;font-size:24px;line-height:24px;font-weight:400;color:#c6c6c6;letter-spacing:0.000px;">H</span>
<div class="sb" style="left:1550px;top:754px"></div>
<div class="val" style="left:1600px;width:368px;top:754px"></div>
<div class="sb" style="left:1968px;width:50px;top:754px"></div>
<svg width="12" height="12" style="left:1570px;top:772px" viewBox="0 0 12 12"><path d="M10.6,1 L10.6,10.6 L0.6,5.8 Z" fill="#f0f0f0"/></svg>
<svg width="12" height="12" style="left:1987px;top:772px" viewBox="0 0 12 12"><path d="M1,1 L1,10.6 L11,5.8 Z" fill="#f0f0f0"/></svg>
<span class="t " style="left:1764.81px;top:765.50px;font-size:24px;line-height:24px;font-weight:400;color:#fff;letter-spacing:0.000px;">240</span>
<div class="lab" style="top:804px;height:48px"></div>
<span class="t " style="left:1371.35px;top:816.00px;font-size:24px;line-height:24px;font-weight:400;color:#c6c6c6;letter-spacing:0.463px;">Color</span>
<div class="" style="position:absolute;left:1550px;top:804px;width:468px;height:48px;background:#faeb4f;"></div>
<div class="lab" style="top:854px;height:48px"></div>
<span class="t " style="left:1371.20px;top:866.00px;font-size:24px;line-height:24px;font-weight:400;color:#c6c6c6;letter-spacing:0.570px;">Locked</span>
<div class="chk" style="top:854px"></div>
<div class="" style="position:absolute;left:1598px;top:852px;width:420px;height:52px;background:#383838;"></div>
<div class="lab" style="top:904px;height:48px"></div>
<span class="t " style="left:1372.47px;top:916.00px;font-size:24px;line-height:24px;font-weight:400;color:#c6c6c6;letter-spacing:0.317px;">Visible</span>
<div class="chk" style="top:904px"></div>
<div class="" style="position:absolute;left:1598px;top:902px;width:420px;height:52px;background:#383838;"></div>
<svg width="20" height="20" style="left:1564px;top:918px" viewBox="0 0 20 20"><path d="M2.4,9.8 L10.1,17.5 L17.3,2.9" stroke="#fff" stroke-width="2.1" fill="none"/></svg>
<div class="lab" style="top:954px;height:48px"></div>
<span class="t " style="left:1370.35px;top:966.00px;font-size:24px;line-height:24px;font-weight:400;color:#c6c6c6;letter-spacing:0.983px;">Interactive</span>
<div class="chk" style="top:954px"></div>
<div class="" style="position:absolute;left:1598px;top:952px;width:420px;height:52px;background:#383838;"></div>
<svg width="20" height="20" style="left:1564px;top:968px" viewBox="0 0 20 20"><path d="M2.4,9.8 L10.1,17.5 L17.3,2.9" stroke="#fff" stroke-width="2.1" fill="none"/></svg>
<div class="lab" style="top:1004px;height:48px"></div>
<span class="t " style="left:1371.20px;top:1016.00px;font-size:24px;line-height:24px;font-weight:400;color:#c6c6c6;letter-spacing:0.500px;">Background</span>
<div class="chk" style="top:1004px"></div>
<div class="" style="position:absolute;left:1598px;top:1002px;width:420px;height:52px;background:#383838;"></div>
<svg width="20" height="20" style="left:1564px;top:1018px" viewBox="0 0 20 20"><path d="M2.4,9.8 L10.1,17.5 L17.3,2.9" stroke="#fff" stroke-width="2.1" fill="none"/></svg>
<div class="lab" style="top:1054px;height:48px"></div>
<span class="t " style="left:1371.47px;top:1066.00px;font-size:24px;line-height:24px;font-weight:400;color:#c6c6c6;letter-spacing:1.171px;">Outline</span>
<div class="chk" style="top:1054px"></div>
<svg width="20" height="20" style="left:1564px;top:1068px" viewBox="0 0 20 20"><path d="M2.4,9.8 L10.1,17.5 L17.3,2.9" stroke="#fff" stroke-width="2.1" fill="none"/></svg>
<div class="val" style="left:1600px;width:418px;top:1054px"></div>
<span class="t " style="left:1603.25px;top:1065.50px;font-size:24px;line-height:24px;font-weight:400;color:#fff;letter-spacing:0.000px;transform:scaleX(0.8901);transform-origin:1.25px 50%;">CORNERS</span>
<svg width="12" height="10" style="left:2000.3px;top:1073px" viewBox="0 0 12 10"><path d="M0.6,0.8 L10.6,0.8 L5.6,8.6 Z" fill="#f0f0f0"/></svg>
<div class="lab" style="top:1104px;height:48px"></div>
<span class="t " style="left:1371.35px;top:1116.00px;font-size:24px;line-height:24px;font-weight:400;color:#c6c6c6;letter-spacing:0.000px;transform:scaleX(0.9647);transform-origin:1.25px 50%;">Grab Focus</span>
<div class="chk" style="top:1104px"></div>
<div class="" style="position:absolute;left:1598px;top:1102px;width:420px;height:52px;background:#383838;"></div>
<svg width="20" height="20" style="left:1564px;top:1118px" viewBox="0 0 20 20"><path d="M2.4,9.8 L10.1,17.5 L17.3,2.9" stroke="#fff" stroke-width="2.1" fill="none"/></svg>
<div class="lab" style="top:1154px;height:48px"></div>
<span class="t " style="left:1371.20px;top:1166.00px;font-size:24px;line-height:24px;font-weight:400;color:#c6c6c6;letter-spacing:1.029px;">Pointer</span>
<div class="val" style="left:1550px;width:468px;top:1154px"></div>
<span class="t " style="left:1553.38px;top:1165.50px;font-size:24px;line-height:24px;font-weight:400;color:#fff;letter-spacing:0.000px;transform:scaleX(0.9356);transform-origin:1.12px 50%;">OLDEST</span>
<svg width="12" height="10" style="left:2000.3px;top:1173px" viewBox="0 0 12 10"><path d="M0.6,0.8 L10.6,0.8 L5.6,8.6 Z" fill="#f0f0f0"/></svg>
<div class="lab" style="top:1204px;height:48px"></div>
<span class="t " style="left:1371.35px;top:1216.00px;font-size:24px;line-height:24px;font-weight:400;color:#c6c6c6;letter-spacing:0.330px;">Corner</span>
<div class="sb" style="left:1550px;top:1204px"></div>
<div class="val" style="left:1600px;width:368px;top:1204px"></div>
<div class="sb" style="left:1968px;width:50px;top:1204px"></div>
<svg width="12" height="12" style="left:1570px;top:1222px" viewBox="0 0 12 12"><path d="M10.6,1 L10.6,10.6 L0.6,5.8 Z" fill="#f0f0f0"/></svg>
<svg width="12" height="12" style="left:1987px;top:1222px" viewBox="0 0 12 12"><path d="M1,1 L1,10.6 L11,5.8 Z" fill="#f0f0f0"/></svg>
<span class="t " style="left:1777.94px;top:1215.50px;font-size:24px;line-height:24px;font-weight:400;color:#fff;letter-spacing:0.000px;">1</span>
<div class="lab" style="top:1254px;height:48px"></div>
<span class="t " style="left:1371.47px;top:1266.00px;font-size:24px;line-height:24px;font-weight:400;color:#c6c6c6;letter-spacing:1.128px;">Orientation</span>
<div class="val" style="left:1550px;width:468px;top:1254px"></div>
<span class="t " style="left:1552.50px;top:1265.50px;font-size:24px;line-height:24px;font-weight:400;color:#fff;letter-spacing:-0.044px;">NORTH</span>
<svg width="12" height="10" style="left:2000.3px;top:1273px" viewBox="0 0 12 10"><path d="M0.6,0.8 L10.6,0.8 L5.6,8.6 Z" fill="#f0f0f0"/></svg>
<div class="" style="position:absolute;left:1368px;top:1302px;width:650px;height:2px;background:#0a0a0a;"></div>
<div class="hdr" style="top:1304px;height:50px"></div>
<div class="" style="position:absolute;left:1368px;top:1354px;width:650px;height:2px;background:#050505;"></div>
<svg width="10" height="12" style="left:1380px;top:1323.6px" viewBox="0 0 10 12"><path d="M1,0.6 L8.8,5.5 L1,10.4 Z" fill="#bababa"/></svg>
<span class="t " style="left:1403.58px;top:1317.80px;font-size:24px;line-height:24px;font-weight:400;color:#fff;letter-spacing:0.000px;transform:scaleX(0.9198);transform-origin:0.62px 50%;">XY</span>
<div class="hdr" style="top:1356px;height:50px"></div>
<div class="" style="position:absolute;left:1368px;top:1406px;width:650px;height:2px;background:#050505;"></div>
<svg width="10" height="12" style="left:1380px;top:1375.6px" viewBox="0 0 10 12"><path d="M1,0.6 L8.8,5.5 L1,10.4 Z" fill="#bababa"/></svg>
<span class="t " style="left:1404.08px;top:1369.80px;font-size:24px;line-height:24px;font-weight:400;color:#fff;letter-spacing:0.475px;">Values</span>
<div class="" style="position:absolute;left:2020px;top:194px;width:22px;height:1078px;background:#686868;"></div>
<div class="" style="position:absolute;left:2042px;top:194px;width:2px;height:1192px;background:#161616;"></div>
</div><div style="position:absolute;left:0;top:0;right:0;height:58px;border-radius:21px 21px 0 0;box-shadow:inset 0 0 0 1px rgba(0,0,0,0.26);"></div></div></body></html>
